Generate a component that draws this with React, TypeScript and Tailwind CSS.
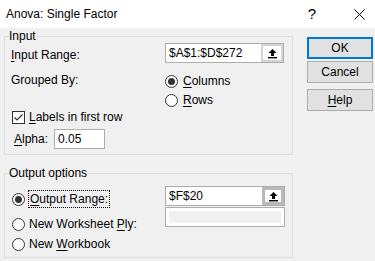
import React from 'react';

function Radio({ checked }: { checked?: boolean }) {
  return (
    <span className="flex h-[13px] w-[13px] shrink-0 items-center justify-center rounded-full border border-[#333333] bg-white">
      {checked && <span className="h-[7px] w-[7px] rounded-full bg-[#333333]" />}
    </span>
  );
}

function Checkbox() {
  return (
    <span className="flex h-[13px] w-[13px] shrink-0 items-center justify-center border border-[#333333] bg-white">
      <svg width="11" height="11" viewBox="0 0 11 11">
        <path d="M1.5 5.5 L4 8 L9.5 2.5" fill="none" stroke="#333333" strokeWidth="1.2" />
      </svg>
    </span>
  );
}

function PickButton({ focused }: { focused?: boolean }) {
  return (
    <span
      className={`flex h-full w-[22px] shrink-0 items-center justify-center bg-white ${
        focused ? 'border-[3px] border-[#b9b9b9]' : 'border-2 border-[#d4d4d4]'
      }`}
    >
      <svg width="11" height="11" viewBox="0 0 11 11">
        <path d="M5.5 1 L9.5 5 L7 5 L7 8 L4 8 L4 5 L1.5 5 Z" fill="#000" />
        <rect x="1" y="9" width="9" height="1.4" fill="#000" />
      </svg>
    </span>
  );
}

function Key({ children }: { children: React.ReactNode }) {
  return <u className="underline underline-offset-[2px]">{children}</u>;
}

export default function App() {
  return (
    <div className="h-[261px] w-[375px] overflow-hidden bg-[#f0f0f0] font-['Liberation_Sans',Arial,sans-serif] text-[12px] leading-[16px] text-black">
      {/* title bar */}
      <div className="flex h-[28px] items-center bg-white pl-[6px]">
        <span className="flex-1">Anova: Single Factor</span>
        <span className="mr-[38px] text-[15px]">?</span>
        <svg width="11" height="11" viewBox="0 0 11 11" className="mr-[10px]">
          <path d="M0.5 0.5 L10.5 10.5 M10.5 0.5 L0.5 10.5" stroke="#000" strokeWidth="1" />
        </svg>
      </div>

      <div className="flex pl-[4px]">
        <div className="w-[289px]">
          {/* Input group */}
          <fieldset className="mt-[1px] h-[126px] border border-[#dcdcdc] pl-[4px]">
            <legend className="leading-[14px]">Input</legend>
            <div className="flex">
              <div className="ml-[2px] flex w-[154px] flex-col">
                <span className="mt-[4px]">
                  <Key>I</Key>nput Range:
                </span>
                <span className="mt-[9px]">Grouped By:</span>
                <label className="mt-[21px] ml-[1px] flex items-center gap-[4px]">
                  <Checkbox />
                  <span>
                    <Key>L</Key>abels in first row
                  </span>
                </label>
                <div className="mt-[4px] ml-[3px] flex h-[20px] items-center">
                  <span className="w-[40px]">
                    <Key>A</Key>lpha:
                  </span>
                  <span className="flex h-[20px] w-[51px] items-center border border-[#adadad] bg-white pl-[3px]">
                    0.05
                  </span>
                </div>
              </div>
              <div className="flex flex-col">
                <div className="flex h-[20px] w-[119px] border border-[#adadad] bg-white">
                  <span className="flex flex-1 items-center pl-[3px]">$A$1:$D$272</span>
                  <PickButton />
                </div>
                <label className="mt-[10px] flex items-center gap-[5px]">
                  <Radio checked />
                  <span>
                    <Key>C</Key>olumns
                  </span>
                </label>
                <label className="mt-[3px] flex items-center gap-[5px]">
                  <Radio />
                  <span>
                    <Key>R</Key>ows
                  </span>
                </label>
              </div>
            </div>
          </fieldset>

          {/* Output group */}
          <fieldset className="mt-[11px] h-[92px] border border-[#dcdcdc] pl-[4px]">
            <legend className="leading-[14px]">Output options</legend>
            <div className="flex">
              <div className="ml-[3px] flex w-[153px] flex-col">
                <label className="mt-[10px] flex items-center gap-[3px]">
                  <Radio checked />
                  <span className="border border-dotted border-black px-px">
                    <Key>O</Key>utput Range:
                  </span>
                </label>
                <label className="mt-[8px] flex items-center gap-[4px]">
                  <Radio />
                  <span>
                    New Worksheet <Key>P</Key>ly:
                  </span>
                </label>
                <label className="mt-[4px] flex items-center gap-[4px]">
                  <Radio />
                  <span>
                    New <Key>W</Key>orkbook
                  </span>
                </label>
              </div>
              <div className="flex flex-col">
                <div className="mt-[6px] flex h-[20px] w-[120px] border border-[#adadad] bg-white">
                  <span className="flex flex-1 items-center pl-[3px]">$F$20</span>
                  <PickButton focused />
                </div>
                <div className="mt-[1px] h-[20px] w-[120px] border border-[#adadad] bg-white p-[3px]">
                  <div className="h-full w-full bg-[#f0f0f0]" />
                </div>
              </div>
            </div>
          </fieldset>
        </div>

        {/* buttons */}
        <div className="ml-[14px] mt-[9px] flex w-[66px] flex-col">
          <button className="h-[22px] border-2 border-[#0078d7] bg-[#e1e1e1]">OK</button>
          <button className="mt-[2px] h-[22px] border border-[#adadad] bg-[#e1e1e1]">Cancel</button>
          <button className="mt-[6px] h-[22px] border border-[#adadad] bg-[#e1e1e1]">
            <Key>H</Key>elp
          </button>
        </div>
      </div>
    </div>
  );
}
